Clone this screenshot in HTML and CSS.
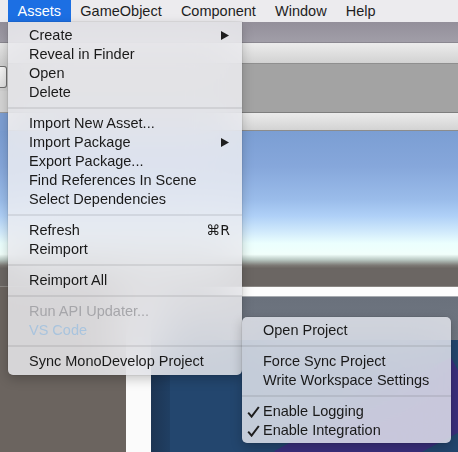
FILE: index.html
```html
<!DOCTYPE html>
<html>
<head>
<meta charset="utf-8">
<link rel="stylesheet" href="styles.css">
</head>
<body>
<div class="menubar">
  <div class="mb-item active">Assets</div>
  <div class="mb-item">GameObject</div>
  <div class="mb-item">Component</div>
  <div class="mb-item">Window</div>
  <div class="mb-item">Help</div>
</div>
<div class="app">
  <div class="titlebar"></div>
  <div class="toprow">
    <div class="leftstrip">
      <div class="ls-tool"></div>
      <div class="ls-btn"><div class="btnface"></div></div>
      <div class="ls-gray"></div>
      <div class="ls-sky"></div>
    </div>
    <div class="rightpart">
      <div class="toolbar"></div>
      <div class="graybar"></div>
      <div class="tabstrip"></div>
    </div>
  </div>
  <div class="sky"></div>
  <div class="ground"></div>
  <div class="lower">
    <div class="dark"></div>
    <div class="whitecol"></div>
    <div class="scene">
      <div class="scene-top"></div>
      <div class="scene-slate"></div>
      <div class="scene-navy">
        <div class="navy-edge"></div>
        <div class="blob"></div>
      </div>
    </div>
  </div>
</div>

<div class="menu main-menu">
  <div class="row"><span>Create</span><svg class="arrow" width="8" height="9" viewBox="0 0 8 9"><polygon points="0,0 8,4.5 0,9" fill="#1e1e1e"/></svg></div>
  <div class="row"><span>Reveal in Finder</span></div>
  <div class="row"><span>Open</span></div>
  <div class="row"><span>Delete</span></div>
  <div class="sep"></div>
  <div class="row"><span>Import New Asset...</span></div>
  <div class="row"><span>Import Package</span><svg class="arrow" width="8" height="9" viewBox="0 0 8 9"><polygon points="0,0 8,4.5 0,9" fill="#1e1e1e"/></svg></div>
  <div class="row"><span>Export Package...</span></div>
  <div class="row"><span>Find References In Scene</span></div>
  <div class="row"><span>Select Dependencies</span></div>
  <div class="sep"></div>
  <div class="row"><span>Refresh</span><span class="shortcut">⌘R</span></div>
  <div class="row"><span>Reimport</span></div>
  <div class="sep"></div>
  <div class="row"><span>Reimport All</span></div>
  <div class="sep"></div>
  <div class="row disabled"><span>Run API Updater...</span></div>
  <div class="row disabled vs"><span>VS Code</span></div>
  <div class="sep"></div>
  <div class="row"><span>Sync MonoDevelop Project</span></div>
</div>

<div class="menu sub-menu">
  <div class="row"><span class="check"></span><span>Open Project</span></div>
  <div class="sep"></div>
  <div class="row"><span class="check"></span><span>Force Sync Project</span></div>
  <div class="row"><span class="check"></span><span>Write Workspace Settings</span></div>
  <div class="sep"></div>
  <div class="row"><span class="check"><svg width="13" height="12" viewBox="0 0 13 12"><path d="M1.2 6.6 L4.6 10.6 L11.8 1" fill="none" stroke="#1e1e1e" stroke-width="2"/></svg></span><span>Enable Logging</span></div>
  <div class="row"><span class="check"><svg width="13" height="12" viewBox="0 0 13 12"><path d="M1.2 6.6 L4.6 10.6 L11.8 1" fill="none" stroke="#1e1e1e" stroke-width="2"/></svg></span><span>Enable Integration</span></div>
</div>
</body>
</html>
```
FILE: styles.css
```css
* { box-sizing: border-box; }
html, body { margin: 0; padding: 0; }
body {
  width: 458px;
  height: 452px;
  overflow: hidden;
  position: relative;
  font-family: "Liberation Sans", "DejaVu Sans", sans-serif;
  font-size: 14.5px;
  color: #222;
  background: #6b6662;
}

/* menu bar */
.menubar {
  display: flex;
  height: 22px;
  padding-left: 8px;
  background: #ecebee;
  line-height: 23px;
  color: #1e1e1e;
}
.mb-item { padding: 0 9.6px; white-space: nowrap; }
.mb-item.active { background: #1c6fe3; color: #fff; }

/* background application */
.app { display: flex; flex-direction: column; height: 430px; }
.titlebar {
  height: 21px;
  background: linear-gradient(#938f9a, #a19ea8);
  border-bottom: 1px solid #8a8790;
}
.toprow { display: flex; height: 88px; }
.leftstrip { width: 8px; display: flex; flex-direction: column; }
.ls-tool { height: 20px; background: linear-gradient(#e8e8e8, #d0d0d0); }
.ls-btn { height: 28px; background: #cfcfcf; padding: 3px 1px 3px 0; }
.btnface {
  height: 100%;
  border: 1px solid #6f6f6f;
  border-left: none;
  border-radius: 0 3px 3px 0;
  background: linear-gradient(#f6f6f6, #e0e0e0);
}
.ls-gray { height: 22px; background: #d4d4d4; border-bottom: 1px solid #9a9a9a; }
.ls-sky { flex: 1; background: #7d9fd3; }
.rightpart { flex: 1; display: flex; flex-direction: column; }
.toolbar { height: 21px; background: linear-gradient(#ececec, #d2d2d2); border-bottom: 1px solid #8f8f8f; }
.graybar { height: 49px; background: #a3a3a3; border-bottom: 1px solid #7e7e7e; }
.tabstrip { height: 18px; background: linear-gradient(#ececec, #d3d3d3); border-bottom: 1px solid #8c8c8c; }

.sky {
  height: 137px;
  background: linear-gradient(
    #7b9ed3 0%,
    #86a7db 26%,
    #9abcea 50%,
    #afd0f7 62%,
    #d2ebfc 74%,
    #ebfffe 82%,
    #f1fffb 90%,
    #b9c8c2 94%,
    #7d7a76 98%,
    #6d6864 100%);
}
.ground { height: 19px; background: #6b6663; border-bottom: 1px solid #8a8784; }

.lower {
  flex: 1;
  display: grid;
  grid-template-columns: 126px 25px 1fr;
}
.dark { background: #6b645f; }
.whitecol { background: #fbfbfb; }
.scene { display: flex; flex-direction: column; }
.scene-top { height: 10px; background: #fdfdfd; border-bottom: 1px solid #a7abb0; }
.scene-slate { height: 43px; background: linear-gradient(#6a717c, #707782); }
.scene-navy {
  flex: 1;
  position: relative;
  overflow: hidden;
  background: #23466e;
  display: flex;
}
.navy-edge { width: 19px; background: linear-gradient(90deg, #1d3553, #203f63); }
.blob {
  position: absolute;
  left: 128px;
  top: 60px;
  width: 200px;
  height: 70px;
  background: #3a2f7c;
  transform: rotate(-28deg);
}

/* menus */
.menu {
  position: absolute;
  background: rgba(238, 238, 242, 0.82);
  backdrop-filter: blur(24px);
  box-shadow: 0 4px 12px rgba(0, 0, 0, 0.22), 0 0 0 0.5px rgba(0, 0, 0, 0.12);
  color: #1a1a1a;
}
.main-menu {
  left: 8px;
  top: 22px;
  width: 234px;
  padding: 4px 0 4px;
  border-radius: 0 0 5px 5px;
}
.sub-menu {
  left: 242px;
  top: 317px;
  width: 209px;
  padding: 4px 0 3px;
  border-radius: 5px;
  background: rgba(236, 238, 244, 0.8);
}
.row {
  height: 19px;
  line-height: 19px;
  padding: 0 12px 0 21px;
  display: flex;
  align-items: center;
  justify-content: space-between;
  white-space: nowrap;
}
.sub-menu .row { padding-left: 0; justify-content: flex-start; }
.check {
  width: 21px;
  height: 19px;
  padding-left: 5px;
  display: flex;
  align-items: center;
}
.arrow { margin-right: 1px; }
.shortcut { font-family: "DejaVu Sans", "Liberation Sans", sans-serif; font-size: 14px; }
.row.disabled { color: #a6a6aa; }
.row.vs { color: #a9c4de; }
.sep {
  height: 2px;
  margin: 5px 0;
  background: rgba(0, 0, 0, 0.08);
}
```
